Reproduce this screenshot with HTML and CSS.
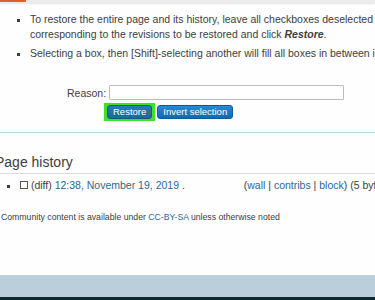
FILE: index.html
```html
<!DOCTYPE html>
<html lang="en">
<head>
    <meta charset="UTF-8">
    <meta name="viewport" content="width=device-width, initial-scale=1.0">
    <title>Undelete</title>
    <link rel="stylesheet" href="styles.css">
</head>
<body>
    <div class="topBar">
        <span class="topAccent"></span>
    </div>

    <main class="page">
        <ul class="helpList">
            <li>To restore the entire page and its history, leave all checkboxes deselected and click Restore. To perform a selective restoration, check the boxes<br>
                corresponding to the revisions to be restored and click <b><i>Restore</i></b>.</li>
            <li>Selecting a box, then [Shift]-selecting another will fill all boxes in between in reverse.</li>
        </ul>

        <form class="restoreForm">
            <div class="reasonRow">
                <label for="reason">Reason:</label>
                <input type="text" id="reason" class="reasonInput">
            </div>
            <div class="buttonRow">
                <span class="focusRing"><button type="button" class="btn btnRestore">Restore</button></span>
                <button type="button" class="btn">Invert selection</button>
            </div>
        </form>

        <h2 class="historyTitle">Page history</h2>
        <ul class="historyList">
            <li>
                <span class="checkBox"></span>
                (diff) <a href="#">12:38, November 19, 2019</a> .
                <span class="userLinks">(<a href="#">wall</a> | <a href="#">contribs</a> | <a href="#">block</a>) (5 bytes)</span>
            </li>
        </ul>

        <p class="license">Community content is available under <a href="#">CC-BY-SA</a> unless otherwise noted</p>
    </main>

    <footer class="bottomBar"></footer>
</body>
</html>
```

FILE: styles.css
```css
/* page base */
body {
    margin: 0;
    height: 300px;
    overflow: hidden;
    font-family: "Liberation Sans", Arial, sans-serif;
    color: #3d3d3d;
    background-color: #fefefe;
    position: relative;
}

a {
    color: #2b6896;
    text-decoration: none;
}

/* thin strip at the very top */
.topBar {
    height: 3px;
    background-color: #ebebeb;
    box-shadow: 0 1px 2px #e2e2e2;
}

.topAccent {
    display: block;
    width: 26px;
    height: 2px;
    background-color: #d9652e;
}

.page {
    white-space: nowrap;
    overflow: hidden;
}

/* the help bullets */
.helpList {
    margin: 9px 0 0;
    padding-left: 30px;
    font-size: 10.5px;
    line-height: 15px;
    list-style: square;
}

.helpList li {
    margin-bottom: 4px;
}

/* reason + buttons */
.restoreForm {
    margin: 24px 0 0;
    font-size: 10.5px;
}

.reasonRow {
    display: flex;
    align-items: center;
    gap: 3px;
    padding-left: 67px;
}

.reasonInput {
    box-sizing: border-box;
    width: 235px;
    height: 15px;
    padding: 0 2px;
    border: 1px solid #bcbcbc;
    border-radius: 1px;
    font-size: 10px;
}

.buttonRow {
    display: flex;
    align-items: center;
    gap: 2px;
    margin-top: 3px;
    padding-left: 104px;
}

.focusRing {
    display: flex;
    padding: 2px 3px;
    background-color: #3ee12a;
}

.btn {
    box-sizing: border-box;
    height: 14px;
    padding: 0 5px;
    border: 1px solid #0f5a92;
    border-radius: 3px;
    background: linear-gradient(#2c88d0, #1468ab);
    color: #fff;
    font-family: "Liberation Sans", Arial, sans-serif;
    font-size: 9.5px;
    line-height: 12px;
}

.btnRestore {
    background: linear-gradient(#227fb4, #166a9c);
    border-color: #125a80;
}

/* history section */
.historyTitle {
    margin: 11px 0 0;
    padding: 20px 0 2px 0;
    border-top: 1px solid #b6d6e2;
    border-bottom: 1px solid #dcdcdc;
    font-size: 14px;
    font-weight: normal;
    line-height: 18px;
    text-indent: -5px;
}

.historyList {
    margin: 4px 0 0;
    padding-left: 20px;
    font-size: 10.5px;
    line-height: 14px;
    list-style: square;
}

.checkBox {
    display: inline-block;
    width: 6px;
    height: 6px;
    border: 1px solid #555;
    vertical-align: 0;
}

.userLinks {
    margin-left: 56px;
}

.license {
    margin: 19px 0 0;
    padding-left: 1px;
    font-size: 8.7px;
    line-height: 12px;
}

/* pale bar at the bottom */
.bottomBar {
    position: absolute;
    left: 0;
    right: 0;
    bottom: 0;
    height: 22px;
    background-color: #bacfdb;
    border-bottom: 3px solid #0c2830;
}
```
